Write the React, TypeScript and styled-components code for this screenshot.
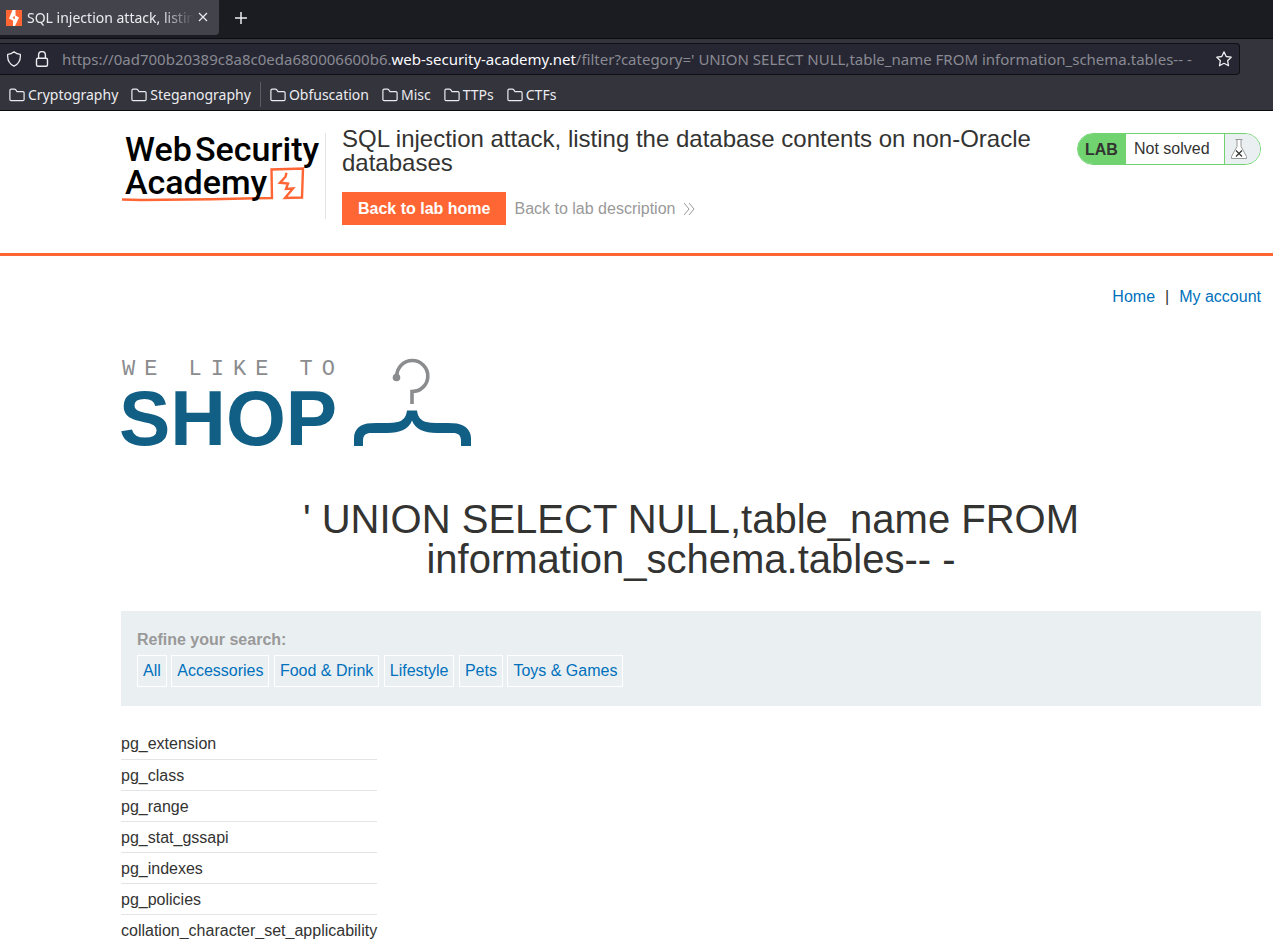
import React from "react";
import styled, { createGlobalStyle } from "styled-components";

const GlobalStyle = createGlobalStyle`
  *, *::before, *::after { box-sizing: border-box; }
  body { margin: 0; background: #fff; }
  button, input { font: inherit; }
`;

const sans = `"Liberation Sans", Arial, sans-serif`;
const ui = `"Noto Sans", sans-serif`;

const Window = styled.div`
  height: 100vh;
  display: flex;
  flex-direction: column;
  overflow: hidden;
`;

const Chrome = styled.header`
  flex: none;
  font: 15px/20px ${ui};
  color: #ececf0;
  background: #33343c;
  border-bottom: 1px solid #0c0c0d;
`;

const TabStrip = styled.div`
  display: flex;
  align-items: flex-start;
  height: 39px;
  background: #1b1c21;
  border-bottom: 1px solid #0c0d12;
`;

const Tab = styled.div`
  display: flex;
  align-items: center;
  width: 219px;
  height: 35px;
  padding: 0 9px 0 6px;
  background: #42434b;
  border-radius: 0 0 4px 0;
`;

const TabTitle = styled.span`
  flex: 1;
  min-width: 0;
  margin: 0 2px 0 5px;
  overflow: hidden;
  white-space: nowrap;
  font-size: 14px;
  mask-image: linear-gradient(to right, #000 80%, transparent);
`;

const IconButton = styled.button`
  display: flex;
  align-items: center;
  justify-content: center;
  padding: 0;
  border: 0;
  background: none;
  color: inherit;
`;

const NewTab = styled(IconButton)`
  width: 43px;
  height: 35px;
`;

const NavBar = styled.div`
  padding: 4px 33px 0 0;
`;

const AddressBar = styled.div`
  display: flex;
  align-items: center;
  gap: 12px;
  height: 32px;
  padding: 0 7px 0 6px;
  background: #262732;
  border: 1px solid #0f1014;
  border-left: 0;
  border-radius: 0 4px 4px 0;
`;

const Url = styled.div`
  flex: 1;
  min-width: 0;
  overflow: hidden;
  white-space: nowrap;
  color: #8a8a92;
`;

const Domain = styled.span`
  color: #fbfbfe;
`;

const Bookmarks = styled.nav`
  display: flex;
  align-items: center;
  gap: 13px;
  height: 35px;
  padding: 4px 9px 0;
`;

const Bookmark = styled(IconButton)`
  gap: 3px;
  font-size: 14px;
`;

const Separator = styled.span`
  width: 1px;
  height: 25px;
  margin: 0 -4px;
  background: #5b5c64;
`;

const Page = styled.div`
  flex: 1;
  min-height: 0;
  overflow: hidden;
  font: 16px/22px ${sans};
  color: #333332;
`;

const LabHeader = styled.section`
  display: flex;
  align-items: flex-start;
  padding: 22px 12px 28px 121px;
  border-bottom: 3px solid #ff6633;
`;

const AcademyLogo = styled.a`
  flex: none;
  width: 205px;
  height: 86px;
  border-right: 1px solid #e3e4e5;
`;

const Titles = styled.div`
  flex: 1;
  min-width: 0;
  padding: 0 36px 0 16px;
`;

const LabTitle = styled.h2`
  margin: -6px 0 17px;
  font-size: 24px;
  line-height: 24px;
  font-weight: 400;
`;

const Actions = styled.div`
  display: flex;
  align-items: center;
  gap: 8px;
`;

const HomeButton = styled.button`
  height: 33px;
  padding: 0 16px;
  border: 0;
  background: #ff6633;
  color: #fff;
  font-weight: 700;
`;

const DescriptionLink = styled.a`
  display: flex;
  align-items: center;
  gap: 8px;
  color: #999;
  text-decoration: none;
`;

const Status = styled.div`
  display: flex;
  flex: none;
  width: 184px;
  height: 32px;
  overflow: hidden;
  line-height: 30px;
  border: 1px solid #70d36f;
  border-radius: 16px;
`;

const StatusTag = styled.strong`
  width: 48px;
  padding: 1px 0 0 7px;
  background: #70d36f;
`;

const StatusText = styled.span`
  flex: 1;
  padding-left: 8px;
`;

const StatusIcon = styled.span`
  width: 36px;
  padding: 4px 0 0 5px;
  line-height: 0;
  background: #eaeff2;
  border-left: 1px solid #70d36f;
`;

const Content = styled.main`
  padding: 30px 12px 0 121px;
`;

const TopLinks = styled.nav`
  display: flex;
  justify-content: flex-end;
  gap: 10px;
`;

const Link = styled.a`
  color: #0071bc;
  text-decoration: none;
`;

const ShopLogo = styled.div`
  height: 94px;
  margin-top: 47px;
`;

const PageTitle = styled.h1`
  margin: 50px 0 32px;
  padding: 0 160px;
  text-align: center;
  font-size: 40px;
  line-height: 40px;
  font-weight: 400;
`;

const Filters = styled.section`
  padding: 18px 16px 19px;
  background: #eaeff2;
`;

const FilterLabel = styled.div`
  margin-bottom: 4px;
  font-weight: 700;
  color: #999;
`;

const FilterList = styled.div`
  line-height: 22px;
`;

const Filter = styled(Link)`
  display: inline-block;
  vertical-align: top;
  padding: 4px 5px;
  border: 1px solid #fff;
`;

const Results = styled.table`
  margin-top: 22px;
  border-collapse: collapse;
`;

const Cell = styled.th`
  height: 31px;
  padding: 2px 0 0;
  text-align: left;
  font-weight: 400;
  white-space: nowrap;
  border-bottom: 1px solid #e3e4e5;
`;

const folders = ["Cryptography", "Steganography", "Obfuscation", "Misc", "TTPs", "CTFs"];
const categories = ["All", "Accessories", "Food & Drink", "Lifestyle", "Pets", "Toys & Games"];
const tables = [
  "pg_extension",
  "pg_class",
  "pg_range",
  "pg_stat_gssapi",
  "pg_indexes",
  "pg_policies",
  "collation_character_set_applicability",
];

const Favicon = () => (
  <svg width="16" height="16" viewBox="0 0 16 16">
    <path fill="#ff6633" d="M0 0h16v16H0z" />
    <path fill="#fff" d="M6.500 0H9.500V5.500L13 7.500 9 16H7V10.500L3 8.500z" />
    <path fill="#ff6633" d="M8.500 5.500l-2 2.500 2.500 1z" />
  </svg>
);

const Shield = () => (
  <svg width="16" height="16" viewBox="0 0 16 16" fill="none" stroke="currentColor" strokeWidth="1.3" strokeLinejoin="round">
    <path d="M8 .8c2 1.700 4 2.400 6.300 2.600C14.800 9 12.700 13 8 15.200 3.300 13 1.200 9 1.700 3.400 4 3.200 6 2.500 8 .8z" />
  </svg>
);

const Lock = () => (
  <svg width="16" height="16" viewBox="0 0 16 16" fill="none" stroke="currentColor" strokeWidth="1.400">
    <rect x="2.500" y="7.300" width="11" height="8" rx="1.500" />
    <path d="M4.600 7V4a3.400 3.400 0 0 1 6.800 0v3" />
  </svg>
);

const Star = () => (
  <svg width="16" height="16" viewBox="0 0 16 16" fill="none" stroke="currentColor" strokeWidth="1.300" strokeLinejoin="round">
    <path d="M8 .9l2.200 4.600 5 .7-3.600 3.500.9 5L8 12.300l-4.500 2.400.9-5L.8 6.200l5-.7z" />
  </svg>
);

const Folder = () => (
  <svg width="16" height="16" viewBox="0 0 16 16" fill="none" stroke="currentColor" strokeWidth="1.200" strokeLinejoin="round">
    <path d="M2.200 2.100h3.300c.5 0 .8.200 1.100.6L8 4.600h5.800c.8 0 1.300.5 1.300 1.200v6.600c0 .8-.5 1.200-1.300 1.200H2.200c-.8 0-1.300-.5-1.300-1.200v-9c0-.8.5-1.300 1.300-1.300z" />
  </svg>
);

const AcademyMark = () => (
  <svg width="204" height="76" viewBox="0 0 204 76" role="img" aria-label="Web Security Academy">
    <path d="M1 66.500 20 67l70-.8L151 65l-.5-28.500 31.500-1L181 64.500l-17 .5 8-9.500-7 .5 2-5.500-8-.8 5.500-6 1-4" fill="none" stroke="#ff6633" strokeWidth="2.400" />
    <g fill="#000" fontFamily="Roboto, sans-serif" fontWeight="500" fontSize="34">
      <text x="4" y="28">Web</text>
      <text x="74" y="28">Security</text>
      <text x="4" y="61">Academy</text>
    </g>
  </svg>
);

const Flask = () => (
  <svg width="18" height="22" viewBox="0 0 18 22" fill="none">
    <path d="M5.500 1.500h7M7 2v6.500L1.500 18.500v2h15v-2L11 8.500V2" fill="#fff" stroke="#999" />
    <path d="M6 12.500l6 6M12 12.500l-6 6" stroke="#333332" strokeWidth="1.200" />
  </svg>
);

const ShopMark = () => (
  <svg width="352" height="94" viewBox="0 0 352 94" role="img" aria-label="We like to shop">
    <text x="1" y="20" fill="#8b8c8e" fontFamily="Liberation Mono, monospace" fontSize="22" letterSpacing="9">WE LIKE TO</text>
    <text x="-2" y="90" fill="#125f85" fontFamily="Liberation Sans, sans-serif" fontWeight="700" fontSize="77">SHOP</text>
    <circle cx="275.500" cy="22.500" r="3.800" fill="#8b8c8e" />
    <path d="M275.800 21a15.500 15.500 0 1 1 15.200 15.500V49" fill="none" stroke="#8b8c8e" strokeWidth="3.600" />
    <path fill="#125f85" d="M286 55.500h10c1 8 5 11.500 14 12.300 6 .5 15 .2 22 .4 11 .3 18 6 18 15V91h-10v-5c0-6-3-8-8-8h-16c-13 0-22-4-25-12.500-3 8.500-12 12.500-25 12.500h-16c-5 0-8 2-8 8v5h-9v-7.800c0-9 6-14.700 17-15 7-.2 16 .1 22-.4 9-.8 13-4.300 14-12.300z" />
  </svg>
);

export default function App() {
  return (
    <Window>
      <GlobalStyle />
      <Chrome>
        <TabStrip>
          <Tab>
            <Favicon />
            <TabTitle>SQL injection attack, listing</TabTitle>
            <IconButton aria-label="Close tab">
              <svg width="14" height="14" viewBox="0 0 14 14" stroke="currentColor" strokeWidth="1.200">
                <path d="M3 2l8 8M11 2l-8 8" />
              </svg>
            </IconButton>
          </Tab>
          <NewTab aria-label="New tab">
            <svg width="14" height="14" viewBox="0 0 14 14" stroke="currentColor" strokeWidth="1.500">
              <path d="M7 1v12M1 7h12" />
            </svg>
          </NewTab>
        </TabStrip>
        <NavBar>
          <AddressBar>
            <Shield />
            <Lock />
            <Url>
              https://0ad700b20389c8a8c0eda680006600b6.<Domain>web-security-academy.net</Domain>
              /filter?category=' UNION SELECT NULL,table_name FROM information_schema.tables-- -
            </Url>
            <IconButton aria-label="Bookmark this page">
              <Star />
            </IconButton>
          </AddressBar>
        </NavBar>
        <Bookmarks aria-label="Bookmarks">
          {folders.map((name, i) => (
            <React.Fragment key={name}>
              {i === 2 && <Separator />}
              <Bookmark>
                <Folder />
                {name}
              </Bookmark>
            </React.Fragment>
          ))}
        </Bookmarks>
      </Chrome>
      <Page>
        <LabHeader>
          <AcademyLogo href="#academy">
            <AcademyMark />
          </AcademyLogo>
          <Titles>
            <LabTitle>SQL injection attack, listing the database contents on non-Oracle databases</LabTitle>
            <Actions>
              <HomeButton>Back to lab home</HomeButton>
              <DescriptionLink href="#description">
                Back to lab description
                <svg width="12" height="14" viewBox="0 0 12 14" fill="none" stroke="#999">
                  <path d="M1 1l5 6-5 6M6 1l5 6-5 6" />
                </svg>
              </DescriptionLink>
            </Actions>
          </Titles>
          <Status>
            <StatusTag>LAB</StatusTag>
            <StatusText>Not solved</StatusText>
            <StatusIcon>
              <Flask />
            </StatusIcon>
          </Status>
        </LabHeader>
        <Content>
          <TopLinks>
            <Link href="#home">Home</Link>
            <span>|</span>
            <Link href="#account">My account</Link>
          </TopLinks>
          <ShopLogo>
            <ShopMark />
          </ShopLogo>
          <PageTitle>' UNION SELECT NULL,table_name FROM information_schema.tables-- -</PageTitle>
          <Filters>
            <FilterLabel>Refine your search:</FilterLabel>
            <FilterList>
              {categories.map((name) => (
                <React.Fragment key={name}>
                  <Filter href="#filter">{name}</Filter>{" "}
                </React.Fragment>
              ))}
            </FilterList>
          </Filters>
          <Results>
            <tbody>
              {tables.map((name) => (
                <tr key={name}>
                  <Cell scope="row">{name}</Cell>
                </tr>
              ))}
            </tbody>
          </Results>
        </Content>
      </Page>
    </Window>
  );
}
